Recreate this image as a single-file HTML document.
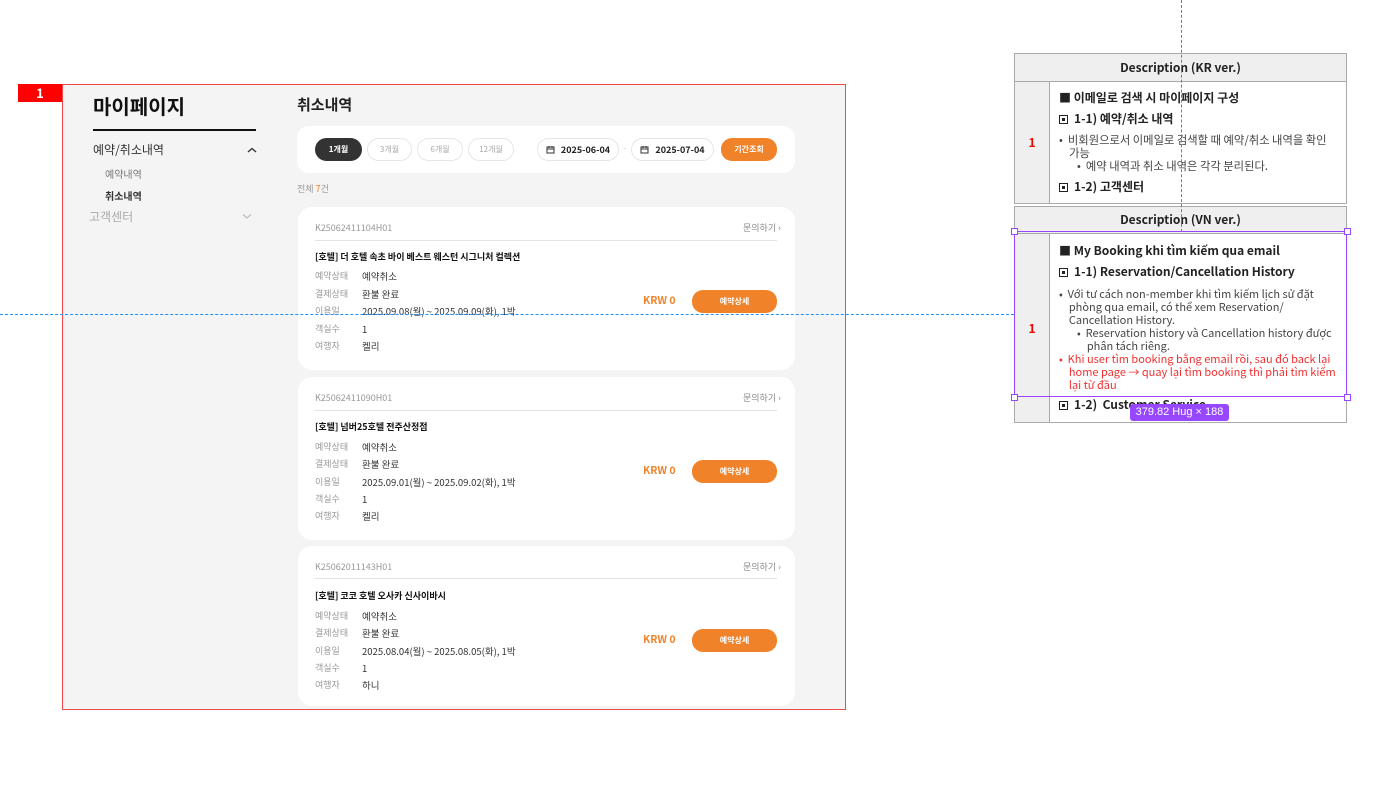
<!DOCTYPE html>
<html><head><meta charset="utf-8">
<style>
*{margin:0;padding:0;box-sizing:border-box}
body{width:1378px;height:812px;background:#fff;position:relative;overflow:hidden;font-family:"Noto Sans CJK KR","Liberation Sans",sans-serif;color:#222}
.a{position:absolute;white-space:nowrap;line-height:1.2}
.frame{position:absolute;left:62px;top:84px;width:784px;height:626px;background:#f4f4f4;border:1px solid #f04848}
.card{position:absolute;left:298px;width:497px;height:163px;background:#fff;border-radius:14px}
.lbl{color:#999;font-size:9px}
.val{color:#333;font-size:9.5px}
.pill{position:absolute;top:138px;height:23px;border:1.5px solid #e6e6e6;border-radius:12px;background:#fff;font-size:8px;color:#aaa;display:flex;align-items:center;justify-content:center}
.btn{position:absolute;background:#f0832a;color:#fff;border-radius:11px;font-size:8px;font-weight:bold;display:flex;align-items:center;justify-content:center}
.tb{position:absolute;left:1014px;width:333px;border:1px solid #aaa}
.hd{background:#efefef;font-weight:bold;font-size:12px;text-align:center;border-bottom:1px solid #aaa}
.lc{position:absolute;left:0;width:35px;background:#efefef;border-right:1px solid #aaa;color:#e00;font-weight:bold;font-size:12px;display:flex;align-items:center;justify-content:center}
.t{position:absolute;left:44px;font-size:11px;line-height:13px;white-space:nowrap}
.b{font-weight:bold;font-size:12px}
.sq{display:inline-block;width:9px;height:9px;border:1px solid #222;position:relative;vertical-align:-1px;margin-right:6px}
.sq:after{content:"";position:absolute;left:2px;top:2px;width:3px;height:3px;background:#222}
.g{color:#444}
.h{position:absolute;width:7px;height:7px;border:1px solid #9747ff;background:#fff}
</style></head><body>

<div class="a" style="left:18px;top:84px;width:44px;height:18px;background:#f00;color:#fff;font-weight:bold;font-size:13px;text-align:center;line-height:18px">1</div>
<div class="frame"></div>

<div class="a" style="left:93px;top:94px;font-size:20px;font-weight:bold;color:#111">마이페이지</div>
<div class="a" style="left:93px;top:129px;width:163px;height:2px;background:#111"></div>
<div class="a" style="left:93px;top:143px;font-size:12px;color:#333">예약/취소내역</div>
<svg class="a" style="left:247px;top:147px" width="10" height="7"><path d="M1 5 L5 1.5 L9 5" fill="none" stroke="#333" stroke-width="1.4"/></svg>
<div class="a" style="left:105px;top:168px;font-size:10px;color:#777">예약내역</div>
<div class="a" style="left:105px;top:190px;font-size:10px;color:#333;font-weight:bold">취소내역</div>
<div class="a" style="left:89px;top:210px;font-size:12px;color:#aaa">고객센터</div>
<svg class="a" style="left:242px;top:213px" width="10" height="7"><path d="M1 1.5 L5 5 L9 1.5" fill="none" stroke="#bbb" stroke-width="1.2"/></svg>

<div class="a" style="left:297px;top:96px;font-size:15px;font-weight:bold;color:#222">취소내역</div>
<div class="a" style="left:297px;top:126px;width:498px;height:47px;background:#fff;border-radius:12px"></div>
<div class="pill" style="left:315px;width:47px;background:#333;border-color:#333;color:#fff;font-weight:bold">1개월</div>
<div class="pill" style="left:367px;width:45px">3개월</div>
<div class="pill" style="left:417px;width:46px">6개월</div>
<div class="pill" style="left:468px;width:46px">12개월</div>
<div class="pill" style="left:537px;width:82px;color:#222;font-weight:bold;font-size:9px">
<svg width="9" height="9" style="margin-right:6px"><rect x="1" y="2" width="7" height="6" fill="none" stroke="#333"/><path d="M1 4h7M3 1v2M6 1v2" stroke="#333"/></svg>2025-06-04</div>
<div class="a" style="left:623px;top:143px;font-size:9px;color:#ccc">-</div>
<div class="pill" style="left:631px;width:83px;color:#222;font-weight:bold;font-size:9px">
<svg width="9" height="9" style="margin-right:6px"><rect x="1" y="2" width="7" height="6" fill="none" stroke="#333"/><path d="M1 4h7M3 1v2M6 1v2" stroke="#333"/></svg>2025-07-04</div>
<div class="btn" style="left:721px;top:138px;width:56px;height:23px">기간조회</div>
<div class="a" style="left:297px;top:184px;font-size:9px;color:#999">전체 <span style="color:#f0832a">7</span>건</div>

<div class="card" style="top:207px"></div>
<div class="card" style="top:377px"></div>
<div class="card" style="top:546px;height:160px"></div>

<!-- card 1 -->
<div class="a lbl" style="left:315px;top:223px">K25062411104H01</div>
<div class="a lbl" style="left:743px;top:223px;color:#888">문의하기 ›</div>
<div class="a" style="left:315px;top:240px;width:462px;height:1px;background:#e3e3e3"></div>
<div class="a" style="left:315px;top:252px;font-size:9px;font-weight:bold;color:#111">[호텔] 더 호텔 속초 바이 베스트 웨스턴 시그니처 컬렉션</div>
<div class="a lbl" style="left:315px;top:271px">예약상태</div><div class="a val" style="left:362px;top:271px">예약취소</div>
<div class="a lbl" style="left:315px;top:289px">결제상태</div><div class="a val" style="left:362px;top:289px">환불 완료</div>
<div class="a lbl" style="left:315px;top:306px">이용일</div><div class="a val" style="left:362px;top:306px">2025.09.08(월) ~ 2025.09.09(화), 1박</div>
<div class="a lbl" style="left:315px;top:324px">객실수</div><div class="a val" style="left:362px;top:324px">1</div>
<div class="a lbl" style="left:315px;top:341px">여행자</div><div class="a val" style="left:362px;top:341px">켈리</div>
<div class="a" style="left:643px;top:295px;font-size:10.5px;font-weight:bold;color:#f0832a">KRW 0</div>
<div class="btn" style="left:692px;top:290px;width:85px;height:23px">예약상세</div>

<!-- card 2 -->
<div class="a lbl" style="left:315px;top:393px">K25062411090H01</div>
<div class="a lbl" style="left:743px;top:393px;color:#888">문의하기 ›</div>
<div class="a" style="left:315px;top:410px;width:462px;height:1px;background:#e3e3e3"></div>
<div class="a" style="left:315px;top:422px;font-size:9px;font-weight:bold;color:#111">[호텔] 넘버25호텔 전주산정점</div>
<div class="a lbl" style="left:315px;top:442px">예약상태</div><div class="a val" style="left:362px;top:442px">예약취소</div>
<div class="a lbl" style="left:315px;top:459px">결제상태</div><div class="a val" style="left:362px;top:459px">환불 완료</div>
<div class="a lbl" style="left:315px;top:477px">이용일</div><div class="a val" style="left:362px;top:477px">2025.09.01(월) ~ 2025.09.02(화), 1박</div>
<div class="a lbl" style="left:315px;top:494px">객실수</div><div class="a val" style="left:362px;top:494px">1</div>
<div class="a lbl" style="left:315px;top:511px">여행자</div><div class="a val" style="left:362px;top:511px">켈리</div>
<div class="a" style="left:643px;top:465px;font-size:10.5px;font-weight:bold;color:#f0832a">KRW 0</div>
<div class="btn" style="left:692px;top:460px;width:85px;height:23px">예약상세</div>

<!-- card 3 -->
<div class="a lbl" style="left:315px;top:562px">K25062011143H01</div>
<div class="a lbl" style="left:743px;top:562px;color:#888">문의하기 ›</div>
<div class="a" style="left:315px;top:578px;width:462px;height:1px;background:#e3e3e3"></div>
<div class="a" style="left:315px;top:591px;font-size:9px;font-weight:bold;color:#111">[호텔] 코코 호텔 오사카 신사이바시</div>
<div class="a lbl" style="left:315px;top:611px">예약상태</div><div class="a val" style="left:362px;top:611px">예약취소</div>
<div class="a lbl" style="left:315px;top:628px">결제상태</div><div class="a val" style="left:362px;top:628px">환불 완료</div>
<div class="a lbl" style="left:315px;top:646px">이용일</div><div class="a val" style="left:362px;top:646px">2025.08.04(월) ~ 2025.08.05(화), 1박</div>
<div class="a lbl" style="left:315px;top:663px">객실수</div><div class="a val" style="left:362px;top:663px">1</div>
<div class="a lbl" style="left:315px;top:680px">여행자</div><div class="a val" style="left:362px;top:680px">하니</div>
<div class="a" style="left:643px;top:634px;font-size:10.5px;font-weight:bold;color:#f0832a">KRW 0</div>
<div class="btn" style="left:692px;top:629px;width:85px;height:23px">예약상세</div>

<!-- KR table -->
<div class="tb" style="top:53px;height:151px">
 <div class="hd" style="height:28px;line-height:27px">Description (KR ver.)</div>
 <div class="lc" style="top:28px;height:121px">1</div>
 <div class="t b" style="top:37px">■ 이메일로 검색 시 마이페이지 구성</div>
 <div class="t b" style="top:58px"><span class="sq"></span>1-1) 예약/취소 내역</div>
 <div class="t g" style="top:80px;font-size:11.3px">•&nbsp; 비회원으로서 이메일로 검색할 때 예약/취소 내역을 확인<br>&nbsp;&nbsp;&nbsp; 가능</div>
 <div class="t g" style="top:106px;left:62px;font-size:11.3px">• &nbsp;예약 내역과 취소 내역은 각각 분리된다.</div>
 <div class="t b" style="top:126px"><span class="sq"></span>1-2) 고객센터</div>
</div>
<!-- VN table -->
<div class="tb" style="top:206px;height:217px">
 <div class="hd" style="height:27px;line-height:26px">Description (VN ver.)</div>
 <div class="lc" style="top:27px;height:188px">1</div>
 <div class="t b" style="top:37px">■ My Booking khi tìm kiếm qua email</div>
 <div class="t b" style="top:58px"><span class="sq"></span>1-1) Reservation/Cancellation History</div>
 <div class="t g" style="top:81px">•&nbsp; Với tư cách non-member khi tìm kiếm lịch sử đặt<br>&nbsp;&nbsp;&nbsp; phòng qua email, có thể xem Reservation/<br>&nbsp;&nbsp;&nbsp; Cancellation History.</div>
 <div class="t g" style="top:120px;left:62px">• &nbsp;Reservation history và Cancellation history được<br>&nbsp;&nbsp;&nbsp; phân tách riêng.</div>
 <div class="t" style="top:146px;color:#f03030">•&nbsp; Khi user tìm booking bằng email rồi, sau đó back lại<br>&nbsp;&nbsp;&nbsp; home page → quay lại tìm booking thì phải tìm kiếm<br>&nbsp;&nbsp;&nbsp; lại từ đầu</div>
 <div class="t b" style="top:191px"><span class="sq"></span>1-2)&nbsp; Customer Service</div>
</div>

<div class="a" style="left:1014px;top:231px;width:333px;height:166px;border:1.5px solid #9747ff"></div>
<div class="h" style="left:1011px;top:228px"></div><div class="h" style="left:1344px;top:228px"></div>
<div class="h" style="left:1011px;top:394px"></div><div class="h" style="left:1344px;top:394px"></div>
<div class="a" style="left:1130px;top:404px;width:99px;height:17px;background:#9747ff;color:#fff;font-family:'Liberation Sans',sans-serif;font-size:11px;border-radius:3px;text-align:center;line-height:17px">379.82 Hug × 188</div>

<div class="a" style="left:0;top:314px;width:1014px;border-top:1px dashed #1e90ff"></div>
<div class="a" style="left:1181px;top:0;height:232px;border-left:1px dashed #1e90ff"></div>
</body></html>
